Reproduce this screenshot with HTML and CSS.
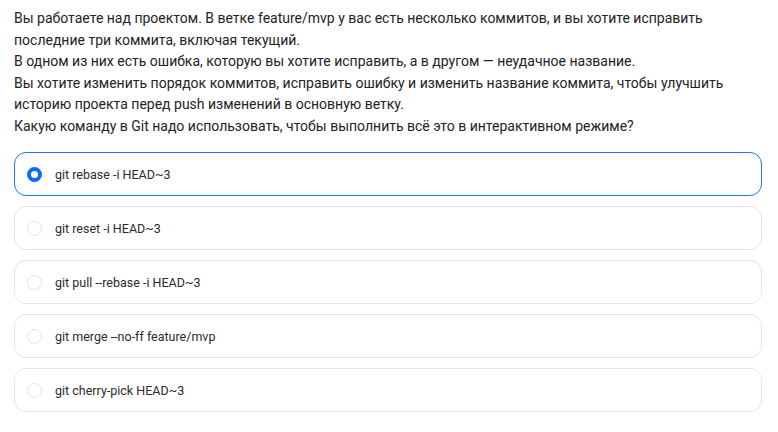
FILE: index.html
```html
<!DOCTYPE html>
<html lang="ru">
<head>
<meta charset="utf-8">
<link rel="stylesheet" href="styles.css">
</head>
<body>
<div class="page">
  <div class="question">
    <p>Вы работаете над проектом. В ветке feature/mvp у вас есть несколько коммитов, и вы хотите исправить последние три коммита, включая текущий.</p>
    <p>В одном из них есть ошибка, которую вы хотите исправить, а в другом — неудачное название.</p>
    <p>Вы хотите изменить порядок коммитов, исправить ошибку и изменить название коммита, чтобы улучшить историю проекта перед push изменений в основную ветку.</p>
    <p>Какую команду в Git надо использовать, чтобы выполнить всё это в интерактивном режиме?</p>
  </div>
  <div class="options">
    <label class="option selected"><span class="radio"></span><span class="label">git rebase -i HEAD~3</span></label>
    <label class="option"><span class="radio"></span><span class="label">git reset -i HEAD~3</span></label>
    <label class="option"><span class="radio"></span><span class="label">git pull --rebase -i HEAD~3</span></label>
    <label class="option"><span class="radio"></span><span class="label">git merge --no-ff feature/mvp</span></label>
    <label class="option"><span class="radio"></span><span class="label">git cherry-pick HEAD~3</span></label>
  </div>
</div>
</body>
</html>
```
FILE: styles.css
```css
html, body {
  margin: 0;
  padding: 0;
  background: #ffffff;
}
.page {
  padding: 8px 16px 0 14px;
  font-family: Roboto, "Noto Sans", sans-serif;
  color: #222326;
}
.question {
  font-size: 14px;
  line-height: 21.5px;
  width: 720px;
}
.question p {
  margin: 0;
}
.options {
  margin-top: 15px;
  display: flex;
  flex-direction: column;
  gap: 10px;
}
.option {
  display: flex;
  align-items: center;
  gap: 13px;
  height: 44px;
  box-sizing: border-box;
  padding: 0 12px;
  border: 1px solid #e2e5ec;
  border-radius: 12px;
  font-size: 12.5px;
  color: #2a2b2e;
}
.option.selected {
  border-color: #1877f2;
}
.radio {
  width: 15px;
  height: 15px;
  box-sizing: border-box;
  border-radius: 50%;
  border: 1px solid #dfe2e8;
  flex: none;
}
.option.selected .radio {
  border: 4.5px solid #0b6df6;
}
```
